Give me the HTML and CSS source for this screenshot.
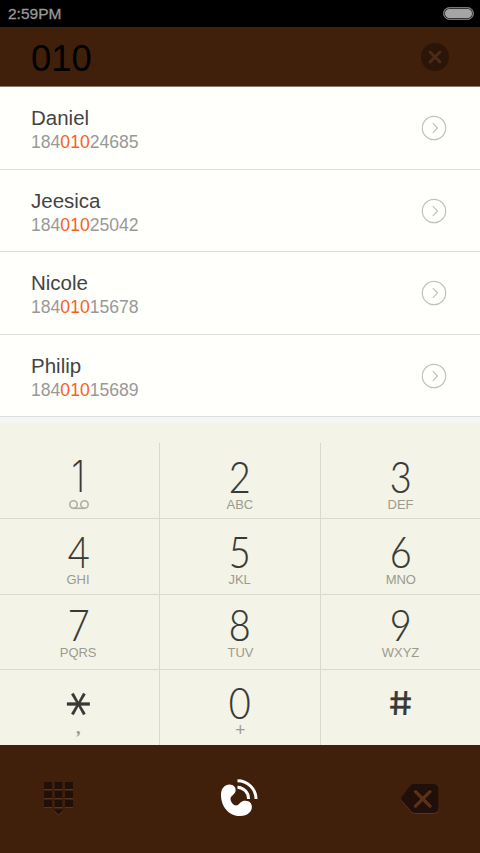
FILE: index.html
```html
<!DOCTYPE html>
<html lang="en">
<head>
<meta charset="utf-8">
<title>Dialer</title>
<link rel="stylesheet" href="styles.css">
</head>
<body>
<svg class="defs" width="0" height="0" aria-hidden="true">
  <symbol id="go" viewBox="0 0 26 26"><circle cx="13" cy="13" r="11.7"/><path d="M11.8 8.2L16.5 13L11.8 17.8"/></symbol>
</svg>
<main class="phone">
  <header class="status"><span>2:59PM</span><i class="battery"></i></header>
  <section class="entry">
    <span class="entry-number">010</span>
    <svg class="clear" viewBox="0 0 30 30"><circle cx="15" cy="15" r="14"/><path d="M10 10L20 20M20 10L10 20"/></svg>
  </section>
  <ul class="contacts">
    <li class="contact"><div><div class="name">Daniel</div><div class="number">184<b>010</b>24685</div></div><svg class="go"><use href="#go"/></svg></li>
    <li class="contact"><div><div class="name">Jeesica</div><div class="number">184<b>010</b>25042</div></div><svg class="go"><use href="#go"/></svg></li>
    <li class="contact"><div><div class="name">Nicole</div><div class="number">184<b>010</b>15678</div></div><svg class="go"><use href="#go"/></svg></li>
    <li class="contact"><div><div class="name">Philip</div><div class="number">184<b>010</b>15689</div></div><svg class="go"><use href="#go"/></svg></li>
  </ul>
  <section class="keypad">
    <div class="key"><span class="digit one">1</span><svg class="voicemail" viewBox="0 0 20 10"><circle cx="4.5" cy="4.5" r="3.7"/><circle cx="15.5" cy="4.5" r="3.7"/><path d="M4.5 8.3H15.5"/></svg></div>
    <div class="key"><span class="digit">2</span><span class="letters">ABC</span></div>
    <div class="key"><span class="digit">3</span><span class="letters">DEF</span></div>
    <div class="key mid"><span class="digit">4</span><span class="letters">GHI</span></div>
    <div class="key mid"><span class="digit">5</span><span class="letters">JKL</span></div>
    <div class="key mid"><span class="digit">6</span><span class="letters">MNO</span></div>
    <div class="key high"><span class="digit">7</span><span class="letters">PQRS</span></div>
    <div class="key high"><span class="digit">8</span><span class="letters">TUV</span></div>
    <div class="key high"><span class="digit">9</span><span class="letters">WXYZ</span></div>
    <div class="key"><span class="digit star"><span>*</span></span><span class="letters comma">,</span></div>
    <div class="key"><span class="digit">0</span><span class="letters plus">+</span></div>
    <div class="key"><span class="digit hash"><span>#</span></span></div>
  </section>
  <footer class="actions">
    <svg class="pad-icon" viewBox="0 0 32 36">
      <g class="edge" transform="translate(0 1)"><path d="M1 1h8v7H1zM11.500 1h8v7h-8zM22 1h8v7h-8zM1 10h8v7H1zM11.500 10h8v7h-8zM22 10h8v7h-8zM1 19h8v7H1zM11.500 19h8v7h-8zM22 19h8v7h-8zM10.500 28.500h10l-5 5z"/></g>
      <path class="dark" d="M1 1h8v7H1zM11.500 1h8v7h-8zM22 1h8v7h-8zM1 10h8v7H1zM11.500 10h8v7h-8zM22 10h8v7h-8zM1 19h8v7H1zM11.500 19h8v7h-8zM22 19h8v7h-8zM10.500 28.500h10l-5 5z"/>
    </svg>
    <svg class="call-icon" viewBox="0 0 40 40">
      <path class="handset" d="M1 16C1 9 5 5.500 9.500 5.500C13.500 5.500 16.500 8.500 15.500 12.500C14.500 15.500 10.800 17 10.500 19.500C10.300 22 12.500 25.500 15 26.300C17.500 27 19 25 20.500 23.500C23.500 21.200 28 21.200 30.800 24.300C33.500 28.500 31 34 26 35.900C21.500 37.700 15 37.200 11 34.700C4.500 31 1 24 1 16z"/>
      <path class="wave" d="M17.500 8.200A11.500 11.500 0 0 1 28.500 20M17.500 1.700A18.500 18.500 0 0 1 36 20"/>
    </svg>
    <svg class="delete-icon" viewBox="0 0 40 32">
      <path class="edge" d="M13 2H33Q38.500 2 38.500 7.500V25.500Q38.500 31 33 31H15Q12.500 31 11 29L1.500 18Q.5 16.500 1.500 15L10 4Q11.500 2 13 2z"/>
      <path class="dark" d="M13 1H33Q38.500 1 38.500 6.500V24.500Q38.500 30 33 30H15Q12.500 30 11 28L1.500 17Q.5 15.500 1.500 14L10 3Q11.500 1 13 1z"/>
      <path class="cross-shadow" d="M15.500 7.500L30 22M30 7.500L15.500 22"/>
      <path class="cross" d="M15.500 8.500L30 23M30 8.500L15.500 23"/>
    </svg>
  </footer>
</main>
</body>
</html>
```
FILE: styles.css
```css
* { box-sizing: border-box; }
body { margin: 0; background: #000; font-family: "Liberation Sans", Arial, sans-serif; }
svg { display: block; flex: none; }
.defs { display: none; }
.phone { width: 480px; height: 853px; display: flex; flex-direction: column; overflow: hidden; }

.status { height: 27px; background: #000; color: #999; display: flex; justify-content: space-between; align-items: center; padding: 0 6px 0 8px; font-size: 15.500px; -webkit-text-stroke: .3px #999; }
.battery { width: 31px; height: 13px; border: 1px solid #777; border-radius: 7px; background: #a5a5a5; box-shadow: inset 0 0 0 1px #333; }

.entry { height: 60px; background: #41200b; border-bottom: 1px solid #8d7767; display: flex; justify-content: space-between; align-items: center; padding: 3px 30px 0 31px; }
.entry-number { font-size: 36.500px; color: #000; padding-top: 2px; }
.clear { width: 30px; height: 30px; margin-bottom: 2px; }
.clear circle { fill: #2b1408; }
.clear path { fill: none; stroke: #4b2a16; stroke-width: 3; stroke-linecap: round; }

.contacts { list-style: none; margin: 0; padding: 0; display: grid; grid-template-rows: 83px 82px 83px 82px; background: #fffffc; }
.contact { display: flex; justify-content: space-between; align-items: center; padding: 2px 33px 0 31px; border-bottom: 1px solid #dcdfdc; }
.contact:nth-child(even) { padding-top: 3px; }
.name { font-size: 20.500px; line-height: 24px; color: #444; margin-bottom: 1px; }
.number { font-size: 17.600px; line-height: 22px; color: #999; }
.number b { font-weight: 400; color: #f9601b; }
.go { width: 26px; height: 26px; margin-bottom: 2px; fill: none; stroke: #bfc2bf; stroke-width: 1.200; }

.keypad { border-top: 6px solid #f5f5f5; padding-top: 20px; background: #f3f3e7; height: 328px; display: grid; grid-template-columns: 160px 161px 159px; grid-template-rows: 76px 76px 75px 75px; }
.key { border-right: 1px solid #d9dacd; border-bottom: 1px solid #d9dacd; display: flex; flex-direction: column; align-items: center; padding-top: 11px; }
.key:nth-child(3n+1) { padding-right: 2px; }
.key.mid { padding-top: 10px; }
.key.high { padding-top: 7px; }
.key:nth-child(3n) { border-right: 0; }
.key:nth-child(n+10) { border-bottom: 0; padding-top: 10px; }
.digit { font-family: Lato, "Liberation Sans", sans-serif; font-weight: 300; font-size: 44px; line-height: 44px; height: 44px; color: #383834; transform: scaleX(.86); -webkit-text-stroke: .2px #383834; }
.one { font-family: Inter, sans-serif; font-weight: 200; font-size: 43px; }
.letters { font-size: 13.500px; line-height: 13px; color: #9a9b90; transform: scaleX(.96); }
.voicemail { width: 20px; height: 10px; margin-top: 2px; fill: none; stroke: #aeafa4; stroke-width: 1.600; }
.star, .hash { transform: none; }
.star span { display: block; width: 44px; height: 44px; text-align: center; font: 50px/62px "DejaVu Sans", sans-serif; transform: translateY(2px) rotate(90deg); }
.hash span { display: block; font: 400 33px/44px Inter, sans-serif; transform: translateY(1px) skewX(8deg) scaleX(1.120); }
.comma { font: 700 19px/13px "Liberation Serif", serif; margin-top: -3px; }
.plus { font-size: 18px; }

.actions { flex: 1; background: #41200b; display: flex; justify-content: space-between; align-items: center; padding: 0 40px 0 43px; }
.pad-icon { width: 32px; height: 36px; }
.call-icon { width: 40px; height: 40px; margin-left: 4px; }
.delete-icon { width: 40px; height: 32px; }
.edge { fill: #573521; }
.dark { fill: #201009; }
.handset { fill: #fff; }
.wave { fill: none; stroke: #fff; stroke-width: 3; }
.cross { fill: none; stroke: #5b3018; stroke-width: 3.500; stroke-linecap: round; }
.cross-shadow { fill: none; stroke: #0e0805; stroke-width: 3.500; stroke-linecap: round; }
```
